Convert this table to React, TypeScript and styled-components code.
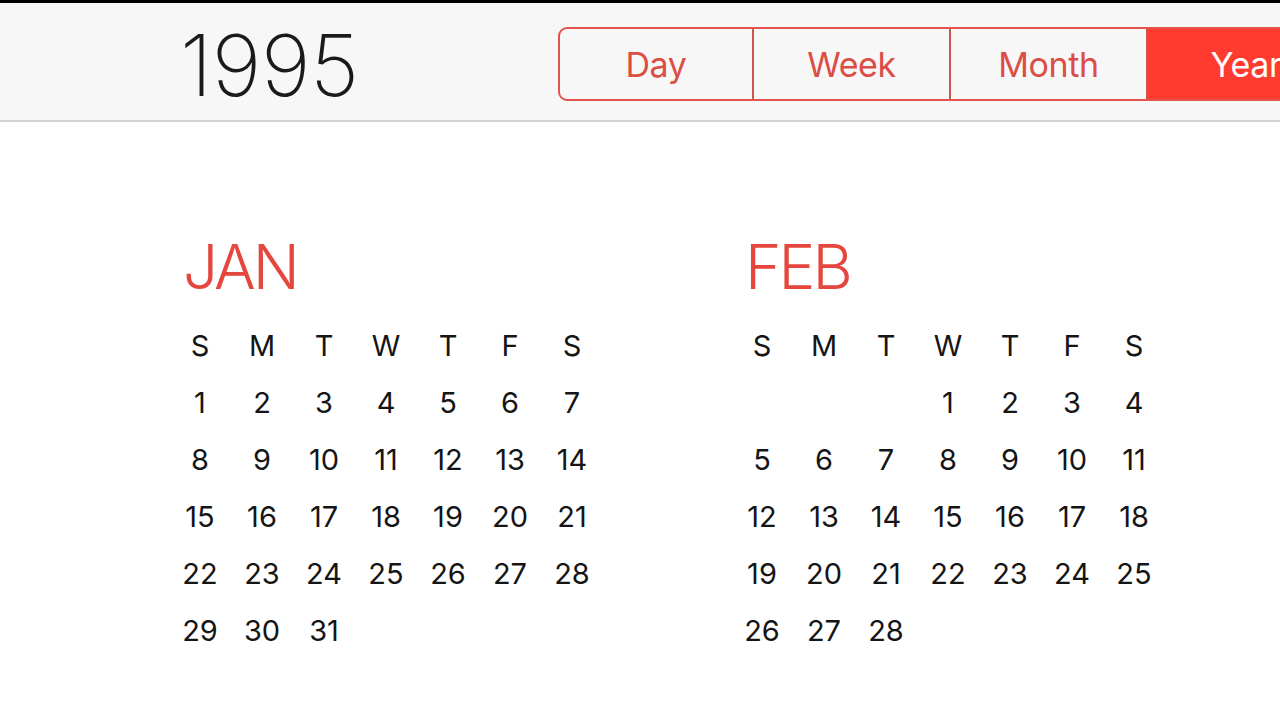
import React from "react";
import styled, { createGlobalStyle } from "styled-components";

const Global = createGlobalStyle`
  html, body { margin: 0; padding: 0; background: #ffffff; overflow: hidden; }
  body { font-family: "Inter", "Liberation Sans", sans-serif; width: 1280px; height: 720px; }
`;

const Page = styled.div`
  width: 1280px;
  height: 720px;
  display: flex;
  flex-direction: column;
  overflow: hidden;
  background: #fff;
`;

const TopBar = styled.div`
  height: 3px;
  background: #000;
  flex: none;
`;

const Header = styled.header`
  height: 117px;
  flex: none;
  background: #f7f7f7;
  border-bottom: 2px solid #d2d2d2;
  display: flex;
  align-items: flex-start;
  padding-left: 180px;
  box-sizing: content-box;
  overflow: hidden;
`;

const Year = styled.h1`
  margin: 19.5px 0 0 0;
  width: 378px;
  flex: none;
  font-size: 85px;
  line-height: 85px;
  font-weight: 200;
  letter-spacing: -0.5px;
  color: #1a1a1a;
`;

const Segmented = styled.div`
  margin-top: 24px;
  display: flex;
  height: 74px;
  box-sizing: border-box;
  border: 2px solid #e2534c;
  border-radius: 9px;
  overflow: hidden;
  flex: none;
`;

const Segment = styled.div<{ $active?: boolean; $w: number }>`
  width: ${(p) => p.$w}px;
  flex: none;
  display: flex;
  align-items: center;
  justify-content: center;
  font-size: 34px;
  letter-spacing: -0.4px;
  font-weight: 400;
  color: ${(p) => (p.$active ? "#ffffff" : "#dc4d46")};
  background: ${(p) => (p.$active ? "#ff3b30" : "transparent")};
  & + & {
    border-left: 2px solid #c9584f;
  }
`;

const Body = styled.main`
  flex: 1;
  display: flex;
  gap: 128px;
  padding: 114px 0 0 169px;
`;

const Month = styled.section`
  width: 434px;
  flex: none;
  display: flex;
  flex-direction: column;
`;

const MonthTitle = styled.h2`
  margin: 0 0 19px 0;
  padding-left: 14px;
  font-size: 62px;
  line-height: 62px;
  font-weight: 300;
  color: #e5473e;
  letter-spacing: -3px;
`;

const Grid = styled.div`
  display: grid;
  grid-template-columns: repeat(7, 62px);
  grid-auto-rows: 57px;
`;

const Cell = styled.div`
  display: flex;
  align-items: center;
  justify-content: center;
  font-size: 29px;
  font-weight: 400;
  color: #151515;
`;

const weekdays = ["S", "M", "T", "W", "T", "F", "S"];

function MonthView({ name, offset, days }: { name: string; offset: number; days: number }) {
  const cells: (number | null)[] = [];
  for (let i = 0; i < offset; i++) cells.push(null);
  for (let d = 1; d <= days; d++) cells.push(d);
  return (
    <Month>
      <MonthTitle>{name}</MonthTitle>
      <Grid>
        {weekdays.map((w, i) => (
          <Cell key={"w" + i}>{w}</Cell>
        ))}
        {cells.map((c, i) => (
          <Cell key={i}>{c ?? ""}</Cell>
        ))}
      </Grid>
    </Month>
  );
}

export default function App() {
  return (
    <Page>
      <Global />
      <TopBar />
      <Header>
        <Year>1995</Year>
        <Segmented>
          <Segment $w={192}>Day</Segment>
          <Segment $w={195}>Week</Segment>
          <Segment $w={195}>Month</Segment>
          <Segment $w={196} $active>
            Year
          </Segment>
        </Segmented>
      </Header>
      <Body>
        <MonthView name="JAN" offset={0} days={31} />
        <MonthView name="FEB" offset={3} days={28} />
      </Body>
    </Page>
  );
}
